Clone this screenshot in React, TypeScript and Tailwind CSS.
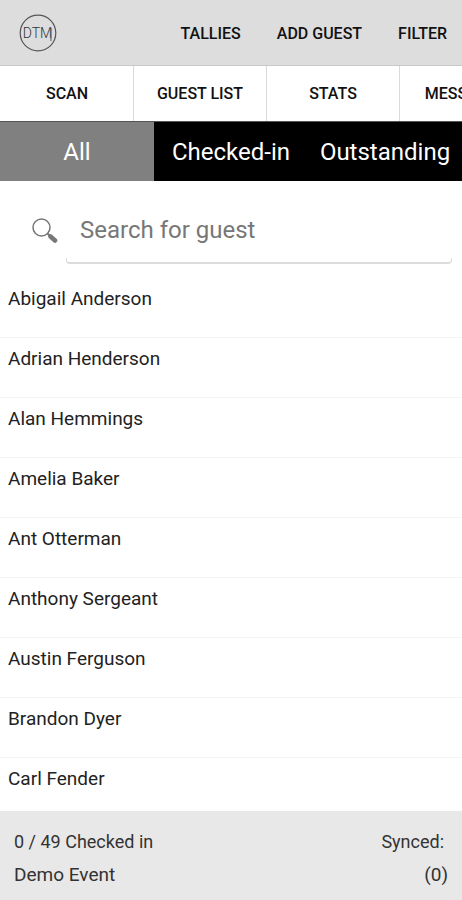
import { useState } from "react";

const actions = ["TALLIES", "ADD GUEST", "FILTER"];
const sections = ["SCAN", "GUEST LIST", "STATS", "MESSAGES"];
const filters = ["All", "Checked-in", "Outstanding"];
const guests = [
  "Abigail Anderson",
  "Adrian Henderson",
  "Alan Hemmings",
  "Amelia Baker",
  "Ant Otterman",
  "Anthony Sergeant",
  "Austin Ferguson",
  "Brandon Dyer",
  "Carl Fender",
];

function Logo() {
  return (
    <svg width="38" height="38" viewBox="0 0 38 38" fill="none" role="img" aria-label="DTM">
      <circle cx="19" cy="19" r="17.8" stroke="#555" strokeWidth="1.2" />
      <text x="18.5" y="24" textAnchor="middle" fontSize="14" fontWeight="300" fill="#333">
        DTM
      </text>
      <path d="M32 14v13" stroke="#555" strokeWidth="1" />
    </svg>
  );
}

function SearchIcon() {
  return (
    <svg width="26" height="26" viewBox="0 0 26 26" fill="none" aria-hidden="true">
      <circle cx="9.5" cy="9.5" r="8.5" stroke="#777" strokeWidth="1.5" />
      <path d="M15.5 15.5l3 3" stroke="#777" strokeWidth="2" />
      <path d="M18.5 18.5l4.5 4" stroke="#777" strokeWidth="4.6" strokeLinecap="round" />
    </svg>
  );
}

export default function App() {
  const [active, setActive] = useState("All");
  const [query, setQuery] = useState("");
  const shown = guests.filter((g) => g.toLowerCase().includes(query.toLowerCase()));

  return (
    <div className="flex h-screen flex-col overflow-hidden bg-white font-[Roboto,sans-serif] text-[#222]">
      <header className="flex h-[66px] shrink-0 items-center justify-between border-b border-[#c8c8c8] bg-[#dddddd] pr-[15px] pl-[19px]">
        <Logo />
        <div className="flex items-center gap-9 pt-[2px]">
          {actions.map((a) => (
            <button key={a} type="button" className="text-[16px] leading-6 font-medium text-[#111]">
              {a}
            </button>
          ))}
        </div>
      </header>

      <nav className="flex h-[55px] shrink-0 overflow-x-auto bg-white pl-px [scrollbar-width:none]">
        {sections.map((s) => (
          <button
            key={s}
            type="button"
            className="h-full w-[133px] shrink-0 border-r border-[#d9d9d9] text-center text-[16px] leading-6 font-medium text-[#111]"
          >
            {s}
          </button>
        ))}
      </nav>

      <div className="grid h-[60px] shrink-0 grid-cols-3 border-t border-[#555] bg-black">
        {filters.map((f) => (
          <button
            key={f}
            type="button"
            aria-pressed={active === f}
            onClick={() => setActive(f)}
            className={
              active === f
                ? "bg-[#808080] text-[24px] leading-8 text-white"
                : "bg-black text-[24px] leading-8 text-white"
            }
          >
            {f}
          </button>
        ))}
      </div>

      <div className="flex shrink-0 items-center pt-[17px] pr-[10px] pb-[14px] pl-8">
        <label htmlFor="guest-search" aria-label="Search for guest" className="w-[34px] shrink-0">
          <SearchIcon />
        </label>
        <div className="flex h-[66px] min-w-0 flex-1 flex-col">
          <input
            id="guest-search"
            type="text"
            value={query}
            onChange={(e) => setQuery(e.target.value)}
            placeholder="Search for guest"
            className="h-[60px] w-full bg-transparent px-[14px] pt-1 text-[24px] text-[#222] outline-none placeholder:text-[#777]"
          />
          <div className="h-[6px] rounded-b-sm border-x border-b-2 border-[#dcdcdc]" />
        </div>
      </div>

      <ul className="min-h-0 flex-1 overflow-y-auto [scrollbar-width:none]">
        {shown.map((g) => (
          <li key={g} className="h-[60px] border-b border-[#f4f4f4] px-2 pt-[9px] text-[19px] leading-6">
            {g}
          </li>
        ))}
      </ul>

      <footer className="grid h-[89px] shrink-0 grid-cols-[1fr_auto] content-start gap-y-[9px] bg-[#e8e8e8] px-[14px] pt-[19px] text-[18px] leading-6 text-[#333]">
        <span>0 / 49 Checked in</span>
        <span className="pr-1 text-right">Synced:</span>
        <span className="text-[19px]">Demo Event</span>
        <span className="text-right text-[19px]">(0)</span>
      </footer>
    </div>
  );
}
